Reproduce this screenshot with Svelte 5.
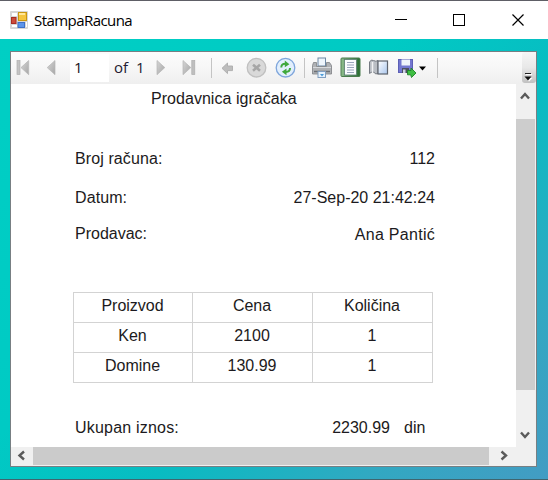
<script>
  const columns = ['Proizvod', 'Cena', 'Količina'];
  const items = [
    ['Ken', '2100', '1'],
    ['Domine', '130.99', '1']
  ];
</script>

<div class="window">
  <header class="titlebar">
    <svg class="appicon" width="18" height="18" viewBox="10 10 18 18">
      <rect x="10" y="10" width="18" height="18" rx="1" fill="#d6d6d6" />
      <path d="M12 12h5v3h-5zM12 24h5v2h-5zM26 21h1v5h-1z" fill="#fff" />
      <rect x="18.5" y="11.5" width="8" height="8" fill="#f5c53e" stroke="#c99712" />
      <path d="M19 13h6" stroke="#ffe79a" stroke-width="2" />
      <rect x="11.5" y="16.5" width="4.500" height="6" fill="#cc4b3b" stroke="#a82d23" />
      <rect x="18" y="21.5" width="6.500" height="5" fill="#5c94ea" stroke="#3c70c6" />
    </svg>
    <h1>StampaRacuna</h1>
    <svg class="controls" width="156" height="38" viewBox="380 1 156 38" fill="none" stroke="#000" stroke-width="1">
      <path d="M395 19.5h12" />
      <rect x="453.5" y="14.5" width="11" height="11" />
      <path d="M512.5 14.5l11 11M523.5 14.5l-11 11" stroke-width="1.2" />
    </svg>
  </header>

  <main class="client">
    <section class="viewer">
      <div class="toolbar">
        <svg width="29" height="32" viewBox="11 52 29 32">
          <defs>
            <linearGradient id="gray" x1="0" y1="0" x2="1" y2="1"><stop stop-color="#d6d6d6" /><stop offset="1" stop-color="#a6a6a6" /></linearGradient>
          </defs>
          <rect x="17" y="60.5" width="3" height="14" fill="#c4c4c4" stroke="#b0b0b0" stroke-width=".7" />
          <path d="M28.7 60.5v14.2L21 67.6z" fill="url(#gray)" stroke="#b6b6b6" stroke-width=".7" />
        </svg>
        <svg width="30" height="32" viewBox="40 52 30 32">
          <path d="M55 60.5v14.2L47.2 67.6z" fill="url(#gray)" stroke="#b6b6b6" stroke-width=".7" />
        </svg>
        <input value="1" aria-label="Page" />
        <span class="pages"><span>of</span><span>1</span></span>
        <svg width="25" height="32" viewBox="150 52 25 32">
          <path d="M157 60.5v14.2l7.8-7.1z" fill="url(#gray)" stroke="#b6b6b6" stroke-width=".7" />
        </svg>
        <svg width="32" height="32" viewBox="175 52 32 32">
          <path d="M183 60.5v14.2l7.8-7.1z" fill="url(#gray)" stroke="#b6b6b6" stroke-width=".7" />
          <rect x="191.8" y="60.5" width="3" height="14" fill="#bfbfbf" stroke="#adadad" stroke-width=".7" />
        </svg>
        <i class="sep"></i>
        <svg width="24" height="32" viewBox="216 52 24 32">
          <path d="M222 68.300l5.500-5.300v3h5v4.600h-5v3z" fill="#bdbdbd" stroke="#adadad" stroke-width=".9" />
        </svg>
        <svg width="30" height="32" viewBox="240 52 30 32">
          <circle cx="256.5" cy="67.7" r="9.3" fill="#d9d9d9" stroke="#c0c0c0" stroke-width="1.3" />
          <path d="M253 64.7l7 6M260 64.7l-7 6" stroke="#a6a6a6" stroke-width="2.6" />
        </svg>
        <svg width="30" height="32" viewBox="270 52 30 32">
          <circle cx="285.5" cy="67.7" r="9.3" fill="#e2effc" stroke="#7fa6dc" stroke-width="1.3" />
          <g fill="none" stroke="#3fa83b" stroke-width="2">
            <path d="M281.300 67.500c0-2.600 1-3.700 4.200-3.700" />
            <path d="M290 68c0 2.600-1 3.900-4.200 3.900" />
          </g>
          <path d="M284.800 60.500l4.600 3.800-4.600 2.900zM286.500 68.500l-4.600 3.200 4.600 3.500z" fill="#3fa83b" />
        </svg>
        <i class="sep"></i>
        <svg width="27" height="32" viewBox="309 52 27 32">
          <rect x="318" y="58" width="7.500" height="8" fill="#eef5fc" stroke="#6e88a4" />
          <path d="M313.500 62.500h3v4h10v-4h3l2 3v8.500h-19v-8.500z" fill="#b0b2b5" stroke="#7d8084" stroke-width=".8" />
          <path d="M313 67.500h18" stroke="#d8dadd" />
          <path d="M314 71.500h16" stroke="#6d7075" stroke-width="1.500" />
          <rect x="318" y="71.500" width="7.500" height="6" fill="#e6f2fd" stroke="#829fc0" />
          <path d="M320 74h4l-2 2.500z" fill="#4b9bd8" />
        </svg>
        <svg width="29" height="32" viewBox="336 52 29 32">
          <defs><linearGradient id="green"><stop stop-color="#8fbd8e" /><stop offset="1" stop-color="#276c31" /></linearGradient></defs>
          <rect x="341" y="58" width="19" height="18.500" rx="1" fill="url(#green)" stroke="#4b7d4e" />
          <rect x="344.500" y="59.500" width="12" height="15.500" fill="#fafcff" stroke="#5a7d70" stroke-width=".8" />
          <path d="M347 62.500h7M347 65h7M347 67.500h7M347 70h7M347 72.500h7" stroke="#8f9cb5" stroke-width=".9" />
        </svg>
        <svg width="28" height="32" viewBox="365 52 28 32">
          <defs><linearGradient id="sheet" x1="0" y1="0" x2="1" y2="1"><stop stop-color="#fff" /><stop offset="1" stop-color="#aac6ed" /></linearGradient></defs>
          <path d="M369.500 73.500V62q1.500-3 4-1.500t4.500 0v13q-2.500 1-3.500-.5t-2-1.500z" fill="#babec4" stroke="#757a82" />
          <path d="M372.500 62v10" stroke="#f1f2f4" stroke-width="1.500" />
          <rect x="378" y="61" width="9.500" height="13" fill="url(#sheet)" stroke="#5d636d" stroke-width="1.200" />
        </svg>
        <svg width="38" height="32" viewBox="393 52 38 32">
          <rect x="398.500" y="59.500" width="14" height="13" fill="#7477d0" stroke="#5c60b6" />
          <rect x="401.500" y="59.500" width="8.500" height="6" fill="#f0f3fb" />
          <rect x="402" y="68" width="7" height="5" fill="#4d5060" />
          <rect x="403" y="69.500" width="2.500" height="3.500" fill="#cdd2e4" />
          <path d="M407.500 70.500h3.500v-2.500l5 5-4.500 4.500-.8-2.700h-3.200z" fill="#3fbe43" stroke="#1d8527" stroke-width=".9" />
          <path d="M419 66.500h7l-3.500 4z" fill="#000" />
        </svg>
        <i class="sep last"></i>
        <button class="overflow" aria-label="More">
          <svg width="14" height="30" viewBox="522 52 14 30">
            <path d="M525 72.500h6" stroke="#222" stroke-width="1" />
            <path d="M526 73.500h6" stroke="#fff" />
            <path d="M525.500 77l7 0-3.500 3.500z" fill="#fff" />
            <path d="M524.500 75.500h7l-3.500 4z" fill="#111" />
          </svg>
        </button>
      </div>

      <div class="middle">
        <article class="report">
          <h2>Prodavnica igračaka</h2>
          <dl>
            <div class="field number"><dt>Broj računa:</dt><dd>112</dd></div>
            <div class="field date"><dt>Datum:</dt><dd>27-Sep-20 21:42:24</dd></div>
            <div class="field seller"><dt>Prodavac:</dt><dd>Ana Pantić</dd></div>
          </dl>
          <table>
            <colgroup><col class="first" /><col class="second" /><col /></colgroup>
            <thead><tr>{#each columns as column}<th>{column}</th>{/each}</tr></thead>
            <tbody>
              {#each items as item}
                <tr>{#each item as value}<td>{value}</td>{/each}</tr>
              {/each}
            </tbody>
          </table>
          <div class="total"><span class="caption">Ukupan iznos:</span><span class="sum">2230.99</span><span class="unit">din</span></div>
        </article>
        <div class="vscroll">
          <svg width="19" height="35" viewBox="516 84 19 35"><path d="M521 98.500l4-4.500 4 4.500" /></svg>
          <div class="vthumb"></div>
          <svg width="19" height="56" viewBox="516 390 19 56"><path d="M521 432.500l4 4.500 4-4.500" /></svg>
        </div>
      </div>

      <div class="hscroll">
        <svg width="22" height="19" viewBox="11 447 22 19"><path d="M24 451.500l-4.500 4 4.500 4" /></svg>
        <div class="hthumb"></div>
        <svg width="47" height="19" viewBox="489 447 47 19"><path d="M501.500 451.500l4.500 4-4.500 4" /></svg>
      </div>
    </section>
  </main>
</div>

<style>
  :global(body) { margin: 0; overflow: hidden; }
  * { box-sizing: border-box; }
  svg { display: block; flex: none; }
  .window {
    width: 548px;
    height: 480px;
    display: flex;
    flex-direction: column;
    border-top: 1px solid #5e5f66;
    border-bottom: 1px solid #40656f;
    font-family: "Liberation Sans", Arial, sans-serif;
    font-size: 16px;
    color: #1c1a20;
  }
  .titlebar {
    height: 38px;
    flex: none;
    display: flex;
    align-items: center;
    padding-left: 10px;
    background: #fff;
  }
  h1 {
    margin: 0 0 0 6px;
    font: 400 15px/20px "Open Sans", "Noto Sans", sans-serif;
    letter-spacing: -.56px;
    color: #000;
  }
  .controls { margin-left: auto; margin-right: 12px; }
  .client {
    flex: 1;
    padding: 12px 11px 11px 10px;
    background: linear-gradient(135deg, #00cfc4 0%, #00cac4 40%, #08bcc2 60%, #32a8c2 82%, #439cc3 100%);
  }
  .viewer {
    height: 416px;
    border: 1px solid #777f83;
    display: flex;
    flex-direction: column;
    background: #efefef;
  }
  .toolbar {
    height: 32px;
    flex: none;
    display: flex;
    background: linear-gradient(#fcfcfc, #f7f7f7 50%, #efefef);
  }
  input {
    width: 39px;
    height: 28px;
    margin: 2px 0 0;
    padding: 0 0 2px 4px;
    border: 0;
    outline: 0;
    background: #fff;
    font: 15px "Open Sans", "Noto Sans", sans-serif;
    color: #1a1020;
  }
  .pages {
    width: 41px;
    padding-left: 5px;
    display: flex;
    gap: 8px;
    font: 15px/31px "Open Sans", "Noto Sans", sans-serif;
    color: #241a30;
  }
  .sep { width: 1px; height: 20px; margin: 6px 5px 0 4px; background: #c4c4c4; flex: none; }
  .sep + svg { margin-left: -1px; }
  .sep.last { margin-left: 6px; }
  .overflow {
    margin: 0 0 0 auto;
    padding: 0;
    width: 14px;
    height: 31px;
    border: 0;
    border-radius: 3px 0 3px 3px;
    background: linear-gradient(#f6f6f6, #e8e8e8 50%, #c0c0c0);
  }
  .middle { height: 363px; display: flex; }
  .report {
    width: 505px;
    padding-left: 62px;
    background: #fff;
  }
  h2 {
    margin: 0;
    padding: 5px 0 0 78px;
    font-size: 16px;
    font-weight: 400;
    line-height: 20px;
    letter-spacing: .04px;
  }
  dl { margin: 40px 0 0; width: 362px; padding-left: 2px; }
  .field { display: flex; justify-content: space-between; line-height: 20px; }
  .date { margin-top: 19px; }
  .seller { margin-top: 16px; }
  dt, dd { margin: 0; }
  .number dt, .date dt { letter-spacing: .1px; }
  .seller dd { padding-top: 1px; letter-spacing: .28px; }
  table {
    margin-top: 47px;
    width: 360px;
    table-layout: fixed;
    border-collapse: collapse;
    text-align: center;
    line-height: 20px;
  }
  .first { width: 119px; }
  .second { width: 120px; }
  th, td { height: 30px; padding: 0 1px 4px 0; border: 1px solid #d3d3d3; font-weight: 400; }
  .total { display: flex; margin-top: 35px; padding-left: 2px; line-height: 20px; }
  .caption { width: 105px; letter-spacing: .2px; }
  .sum { width: 210px; text-align: right; }
  .unit { margin-left: 14px; }
  .vscroll { width: 19px; margin-right: 1px; background: #f0f0f0; }
  .vthumb { height: 271px; background: #cdcdcd; }
  .hscroll { height: 19px; display: flex; background: #f0f0f0; }
  .hthumb { width: 456px; height: 18px; background: #cbcbcb; }
  .vscroll path, .hscroll path { fill: none; stroke: #5a5a5a; stroke-width: 2.400; }
</style>
